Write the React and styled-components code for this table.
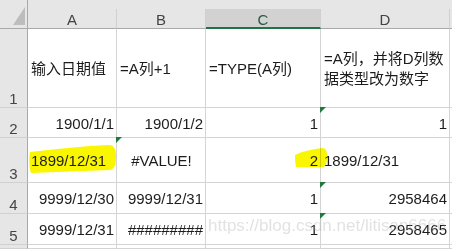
import React from 'react';
import styled, { createGlobalStyle } from 'styled-components';

const GlobalStyle = createGlobalStyle`
  html, body {
    margin: 0;
    padding: 0;
    background: #fff;
  }
  body {
    font-family: "Liberation Sans", "Noto Sans CJK SC", Arial, sans-serif;
  }
`;

const justify = { left: 'flex-start', right: 'flex-end', center: 'center' };

const Sheet = styled.div`
  position: relative;
  display: grid;
  grid-template-columns: 28px 89px 89px 115px 129px 1fr;
  grid-template-rows: 29px 79px 30px 45px 31px 31px 1fr;
  width: 452px;
  height: 249px;
  overflow: hidden;
  background: #fff;
`;

const Corner = styled.div`
  display: flex;
  align-items: flex-end;
  justify-content: flex-end;
  padding: 0 2px 3px 0;
  background: #e6e6e6;
  border-right: 1px solid #a9a9a9;
  border-bottom: 1px solid #a9a9a9;
`;

const ColHead = styled.div`
  display: flex;
  padding-top: 9px;
  background: #e6e6e6;
`;

const ColLabel = styled.div`
  flex: 1;
  display: flex;
  align-items: center;
  justify-content: center;
  padding-top: 2px;
  font-size: 15px;
  background: ${(p) => (p.$active ? '#d2d2d2' : '#e6e6e6')};
  color: ${(p) => (p.$active ? '#285a40' : '#444')};
  border-right: 1px solid #d0d0d0;
  border-bottom: ${(p) => (p.$active ? '2px solid #217346' : '1px solid #a9a9a9')};
`;

const RowHead = styled.div`
  display: flex;
  align-items: flex-end;
  justify-content: center;
  font-size: 15px;
  line-height: 17px;
  color: #444;
  background: #e6e6e6;
  border-right: 1px solid #a9a9a9;
  border-bottom: 1px solid #d0d0d0;
`;

const Cell = styled.div`
  position: relative;
  display: flex;
  align-items: center;
  justify-content: ${(p) => justify[p.$align || 'left']};
  padding: 2px 2px 0 3px;
  font-size: 15px;
  line-height: 20px;
  color: #1c1c1c;
  white-space: nowrap;
  border-right: 1px solid #d4d4d4;
  border-bottom: 1px solid #d4d4d4;

  &::before {
    content: '';
    display: ${(p) => (p.$flag ? 'block' : 'none')};
    position: absolute;
    top: -1px;
    left: -1px;
    border-style: solid;
    border-width: 6px 6px 0 0;
    border-color: #1f7a3e transparent transparent transparent;
  }
`;

const Value = styled.span`
  position: relative;
`;

const Marker = styled.svg`
  position: absolute;
  left: ${(p) => p.$x}px;
  top: ${(p) => p.$y}px;
  mix-blend-mode: multiply;
  pointer-events: none;
`;

const Watermark = styled.div`
  position: absolute;
  left: 208px;
  top: 217px;
  font-size: 17px;
  line-height: 1;
  color: rgba(160, 160, 160, 0.3);
  white-space: nowrap;
  pointer-events: none;
`;

const YELLOW = '#f9f600';

const rows = [
  {
    n: 1,
    cells: [
      { v: '输入日期值' },
      { v: '=A列+1' },
      { v: '=TYPE(A列)' },
      { v: ['=A列，并将D列数', '据类型改为数字'], wrap: true },
    ],
  },
  {
    n: 2,
    cells: [
      { v: '1900/1/1', a: 'right' },
      { v: '1900/1/2', a: 'right' },
      { v: '1', a: 'right' },
      { v: '1', a: 'right', flag: true },
    ],
  },
  {
    n: 3,
    cells: [
      { v: '1899/12/31', mark: 'long' },
      { v: '#VALUE!', a: 'center', flag: true },
      { v: '2', a: 'right', mark: 'short' },
      { v: '1899/12/31' },
    ],
  },
  {
    n: 4,
    cells: [
      { v: '9999/12/30', a: 'right' },
      { v: '9999/12/31', a: 'right' },
      { v: '1', a: 'right' },
      { v: '2958464', a: 'right', flag: true },
    ],
  },
  {
    n: 5,
    cells: [
      { v: '9999/12/31', a: 'right' },
      { v: '#########', a: 'right' },
      { v: '1', a: 'right' },
      { v: '2958465', a: 'right', flag: true },
    ],
  },
];

const LongMark = () => (
  <Marker $x={1} $y={7} width="87" height="28" viewBox="0 0 87 28">
    <path
      d="M1,7 C28,4 55,1 80,0 C85,0 87,4 87,11 C87,19 86,24 81,25 C55,26 28,27 2,28 C0,22 0,12 1,7 Z"
      fill={YELLOW}
    />
  </Marker>
);

const ShortMark = () => (
  <Marker $x={89} $y={10} width="32" height="19" viewBox="0 0 32 19">
    <path
      d="M0,7 C8,3 18,1 27,0 C31,0 32,3 32,8 C32,14 31,18 28,19 C18,19 8,19 1,19 C0,15 0,10 0,7 Z"
      fill={YELLOW}
    />
  </Marker>
);

const renderCell = (cell, i) => (
  <Cell key={i} $align={cell.a} $flag={cell.flag}>
    {cell.mark === 'long' && <LongMark />}
    {cell.mark === 'short' && <ShortMark />}
    {cell.wrap ? (
      <Value style={{ whiteSpace: 'normal' }}>
        {cell.v[0]}
        <br />
        {cell.v[1]}
      </Value>
    ) : (
      <Value>{cell.v}</Value>
    )}
  </Cell>
);

export default function App() {
  return (
    <>
      <GlobalStyle />
      <Sheet>
        <Corner>
          <svg width="12" height="18" viewBox="0 0 12 18">
            <polygon points="12,0 12,18 0,18" fill="#bdbdbd" />
          </svg>
        </Corner>
        {['A', 'B', 'C', 'D', ''].map((l) => (
          <ColHead key={l || 'x'}>
            <ColLabel $active={l === 'C'}>{l}</ColLabel>
          </ColHead>
        ))}

        {rows.map((row) => (
          <React.Fragment key={row.n}>
            <RowHead>{row.n}</RowHead>
            {row.cells.map(renderCell)}
            <Cell />
          </React.Fragment>
        ))}

        <RowHead />
        <Cell />
        <Cell />
        <Cell />
        <Cell />
        <Cell />

        <Watermark>https://blog.csdn.net/litisan6666</Watermark>
      </Sheet>
    </>
  );
}
